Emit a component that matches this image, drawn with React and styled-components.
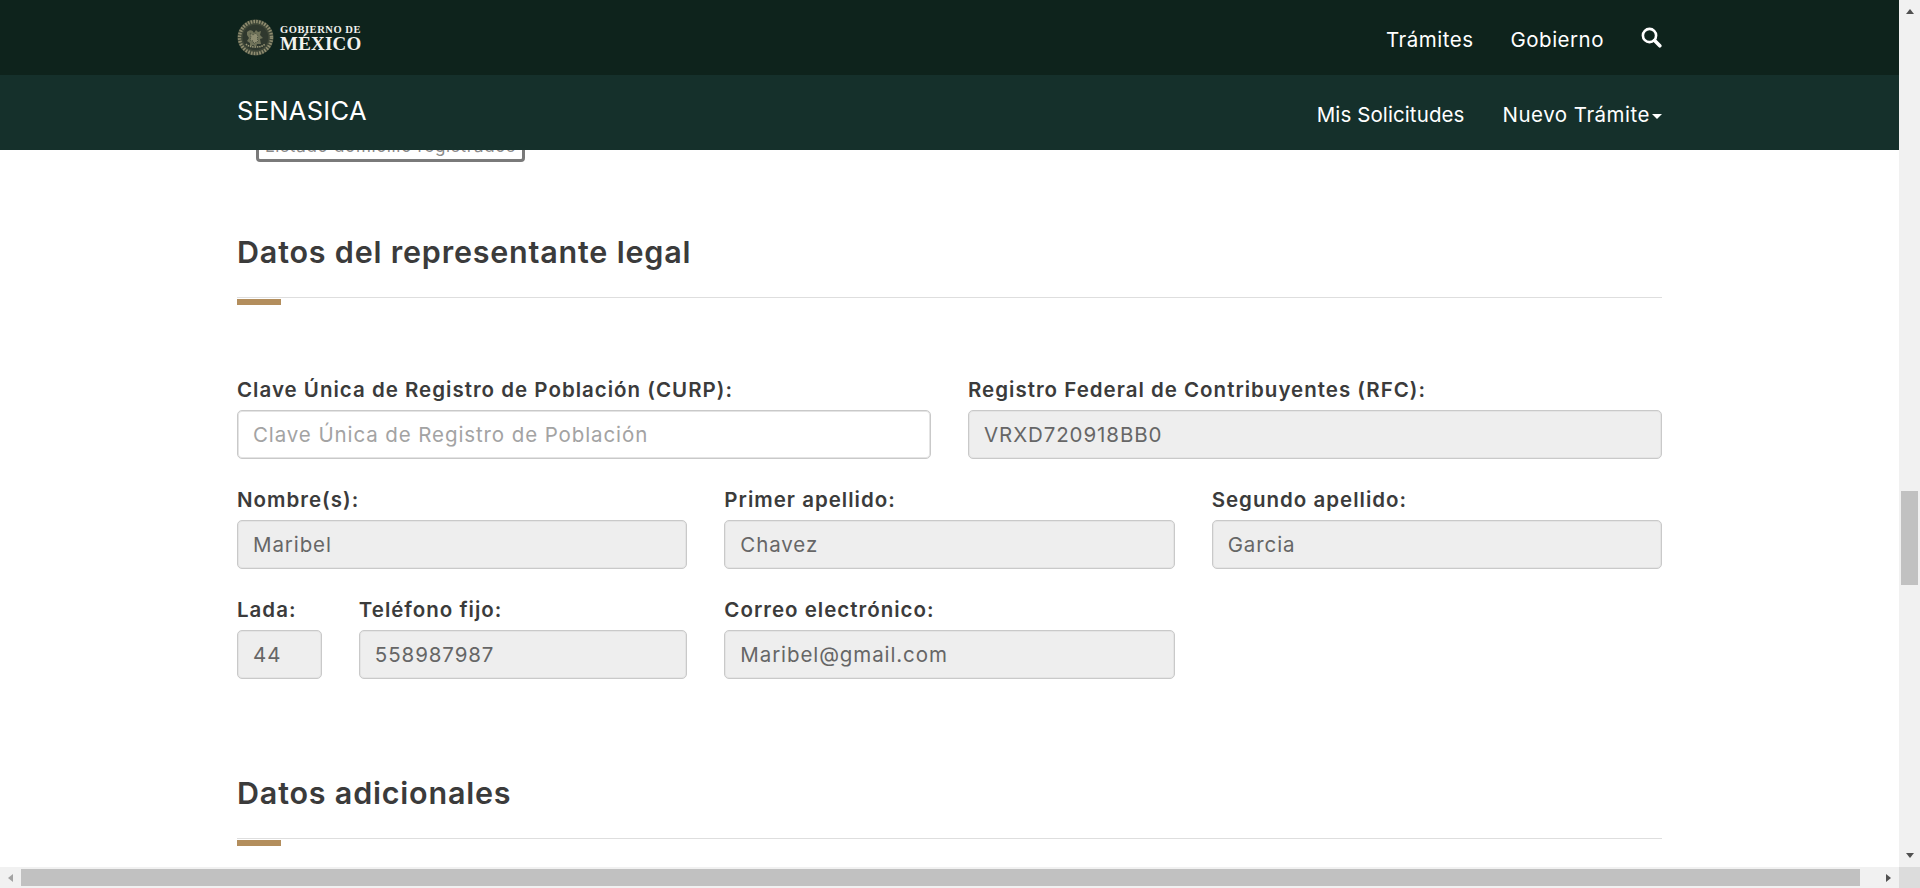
import React from "react"
import styled, { createGlobalStyle } from "styled-components"

const GlobalStyle = createGlobalStyle`
  html, body {
    margin: 0;
    padding: 0;
    height: 100%;
    overflow: hidden;
    background: #fff;
    font-family: Inter, "Noto Sans", "Liberation Sans", sans-serif;
  }
  * { box-sizing: border-box; }
`

const Frame = styled.div`
  display: grid;
  grid-template-columns: 1fr 21px;
  grid-template-rows: 1fr 21px;
  width: 1920px;
  height: 888px;
  overflow: hidden;
`

const Page = styled.div`
  display: flex;
  flex-direction: column;
  min-width: 0;
  min-height: 0;
  overflow: hidden;
`

const TopBar = styled.div`
  flex: 0 0 75px;
  background: #0e231c;
  position: relative;
  z-index: 2;
`

const SubBar = styled.div`
  flex: 0 0 75px;
  background: #15302b;
  position: relative;
  z-index: 2;
`

const BarInner = styled.div`
  display: flex;
  align-items: center;
  justify-content: space-between;
  width: 1425px;
  height: 100%;
  margin-left: 237px;
`

const Logo = styled.div`
  display: flex;
  align-items: center;
  gap: 6px;
  margin-top: -1px;
`

const LogoText = styled.div`
  display: flex;
  flex-direction: column;
  padding-top: 3px;
  font-family: "Liberation Serif", serif;
  font-weight: 700;
  color: #f2f2ee;
`

const LogoSmall = styled.span`
  font-size: 10.5px;
  line-height: 11px;
  letter-spacing: 0.55px;
`

const LogoBig = styled.span`
  font-size: 19px;
  line-height: 18px;
  letter-spacing: 0.2px;
`

const Nav = styled.nav`
  display: flex;
  align-items: center;
  gap: ${p => p.$gap}px;
  margin-top: ${p => p.$top}px;
`

const NavLink = styled.a`
  color: #fff;
  font-size: 20.5px;
  font-weight: 400;
  letter-spacing: ${p => p.$spacing ?? 0.5}px;
  white-space: nowrap;
`

const SearchButton = styled.span`
  display: flex;
  margin-top: -4px;
`

const Caret = styled.span`
  display: inline-block;
  width: 0;
  height: 0;
  margin-left: 2px;
  vertical-align: 3px;
  border-top: 5px solid #fff;
  border-left: 5px solid transparent;
  border-right: 5px solid transparent;
`

const Brand = styled.span`
  color: #fff;
  font-size: 25.5px;
  font-weight: 400;
  letter-spacing: 0.3px;
  margin-top: -5px;
`

const Body = styled.main`
  flex: 1;
  min-height: 0;
  overflow: hidden;
  padding-left: 237px;
`

const Content = styled.div`
  width: 1425px;
  margin-top: -24px;
`

const ListButton = styled.button`
  display: block;
  width: 269px;
  height: 36px;
  margin-left: 19px;
  padding: 3px 6px 0;
  background: #fff;
  border: 3px solid #7a7a7a;
  border-radius: 4px;
  color: #8a8a8a;
  font: 400 17px Inter, sans-serif;
  letter-spacing: 0.7px;
  white-space: nowrap;
  text-align: left;
`

const Section = styled.section`
  margin-top: ${p => p.$top}px;
`

const Title = styled.h2`
  margin: 0;
  height: 46px;
  color: #3b3b3b;
  font-size: 30.5px;
  line-height: 46px;
  font-weight: 600;
  letter-spacing: 0.8px;
  white-space: nowrap;
`

const Rule = styled.div`
  height: 1px;
  margin-top: 22px;
  background: #dedede;
`

const Accent = styled.div`
  width: 44px;
  height: 6px;
  margin-top: 1px;
  background: #b38e5d;
`

const FormGrid = styled.div`
  display: grid;
  grid-template-columns: repeat(12, 1fr);
  column-gap: 37px;
  row-gap: 25px;
  margin-top: 69px;
`

const Field = styled.div`
  grid-column: span ${p => p.$span};
  min-width: 0;
`

const Label = styled.label`
  display: block;
  height: 31px;
  margin-bottom: 5px;
  color: #3b3b3b;
  font-size: 20.5px;
  line-height: 31px;
  font-weight: 600;
  letter-spacing: 1px;
  white-space: nowrap;
`

const Input = styled.input`
  display: block;
  width: 100%;
  height: 49px;
  padding: 0 15px;
  background: #fff;
  border: 1px solid #c9c9c9;
  border-radius: 5px;
  box-shadow: inset 0 0 0 1px #e4e4e4;
  font: 400 20.5px Inter, sans-serif;
  letter-spacing: 0.9px;
  color: #666;
  outline: none;

  &::placeholder {
    color: #a3a3a3;
    opacity: 1;
  }

  &:disabled {
    background: #eeeeee;
    color: #666;
    -webkit-text-fill-color: #666;
    opacity: 1;
  }
`

const VScroll = styled.div`
  display: flex;
  flex-direction: column;
  align-items: center;
  background: #f1f1f1;
  padding-top: 9px;
`

const HScroll = styled.div`
  display: flex;
  align-items: center;
  background: #f1f1f1;
`

const VThumb = styled.div`
  width: 17px;
  height: 94px;
  margin-top: 477px;
  background: #c1c1c1;
`

const HThumb = styled.div`
  width: 1839px;
  height: 17px;
  background: #c1c1c1;
`

const Corner = styled.div`
  background: #dcdcdc;
`

const ArrowCell = styled.div`
  display: flex;
  align-items: center;
  justify-content: ${p => (p.$end ? "flex-end" : "center")};
  flex: 0 0 ${p => p.$size}px;
  padding-right: ${p => (p.$end ? 8 : 0)}px;
`

const ArrowUp = styled.span`
  width: 0;
  height: 0;
  border-left: 4.5px solid transparent;
  border-right: 4.5px solid transparent;
  border-bottom: 5px solid #505050;
`

const ArrowDown = styled.span`
  width: 0;
  height: 0;
  margin-top: auto;
  margin-bottom: 9px;
  border-left: 4.5px solid transparent;
  border-right: 4.5px solid transparent;
  border-top: 5px solid #505050;
`

const ArrowLeft = styled.span`
  width: 0;
  height: 0;
  border-top: 4.5px solid transparent;
  border-bottom: 4.5px solid transparent;
  border-right: 5px solid #a3a3a3;
`

const ArrowRight = styled.span`
  width: 0;
  height: 0;
  border-top: 4.5px solid transparent;
  border-bottom: 4.5px solid transparent;
  border-left: 5px solid #505050;
`

const SearchIcon = () => (
  <svg width="21" height="21" viewBox="0 0 21 21" aria-hidden="true">
    <circle cx="8.5" cy="8.5" r="6.6" fill="none" stroke="#fff" strokeWidth="2.6" />
    <line x1="13.6" y1="13.6" x2="18.8" y2="18.8" stroke="#fff" strokeWidth="3.6" strokeLinecap="round" />
  </svg>
)

const Seal = () => (
  <svg width="37" height="37" viewBox="0 0 37 37" aria-hidden="true">
    <circle cx="18.5" cy="18.5" r="18" fill="#3f4738" />
    <circle cx="18.5" cy="18.5" r="16" fill="none" stroke="#8f8d70" strokeWidth="3.4" strokeDasharray="1.6 1.2" />
    <circle cx="18.5" cy="18.5" r="12.8" fill="#2f382e" />
    <path d="M10 13c3-3 6-2 7 1l2-3 2 2 3-1-1 4 3 3-3 1 1 5-4 0-1 3-3-2-3 2 0-4-3-2 2-3-2-3z" fill="#6f7259" />
    <path d="M13 14l3 2 3-2 2 3-1 3 2 2-3 1-2 2-1-3-3-1 1-3z" fill="#8f8e72" strokeDasharray="1 1" stroke="#3a4236" strokeWidth="0.8" />
    <path d="M9 25c3 4 16 4 19 0" fill="none" stroke="#9a9878" strokeWidth="1.6" strokeDasharray="1.5 0.8" />
  </svg>
)

const App = () => (
  <>
    <GlobalStyle />
    <Frame>
      <Page>
        <TopBar>
          <BarInner>
            <Logo>
              <Seal />
              <LogoText>
                <LogoSmall>GOBIERNO DE</LogoSmall>
                <LogoBig>MÉXICO</LogoBig>
              </LogoText>
            </Logo>
            <Nav $gap={37} $top={3}>
              <NavLink>Trámites</NavLink>
              <NavLink>Gobierno</NavLink>
              <SearchButton>
                <SearchIcon />
              </SearchButton>
            </Nav>
          </BarInner>
        </TopBar>
        <SubBar>
          <BarInner>
            <Brand>SENASICA</Brand>
            <Nav $gap={38} $top={3}>
              <NavLink $spacing={0.1}>Mis Solicitudes</NavLink>
              <NavLink>
                Nuevo Trámite
                <Caret />
              </NavLink>
            </Nav>
          </BarInner>
        </SubBar>
        <Body>
          <Content>
            <ListButton>Listado domicilio registrados</ListButton>
            <Section $top={67}>
              <Title>Datos del representante legal</Title>
              <Rule />
              <Accent />
              <FormGrid>
                <Field $span={6}>
                  <Label>Clave Única de Registro de Población (CURP):</Label>
                  <Input placeholder="Clave Única de Registro de Población" />
                </Field>
                <Field $span={6}>
                  <Label>Registro Federal de Contribuyentes (RFC):</Label>
                  <Input disabled value="VRXD720918BB0" />
                </Field>
                <Field $span={4}>
                  <Label>Nombre(s):</Label>
                  <Input disabled value="Maribel" />
                </Field>
                <Field $span={4}>
                  <Label>Primer apellido:</Label>
                  <Input disabled value="Chavez" />
                </Field>
                <Field $span={4}>
                  <Label>Segundo apellido:</Label>
                  <Input disabled value="Garcia" />
                </Field>
                <Field $span={1}>
                  <Label>Lada:</Label>
                  <Input disabled value="44" />
                </Field>
                <Field $span={3}>
                  <Label>Teléfono fijo:</Label>
                  <Input disabled value="558987987" />
                </Field>
                <Field $span={4}>
                  <Label>Correo electrónico:</Label>
                  <Input disabled value="Maribel@gmail.com" />
                </Field>
              </FormGrid>
            </Section>
            <Section $top={91}>
              <Title>Datos adicionales</Title>
              <Rule />
              <Accent />
            </Section>
          </Content>
        </Body>
      </Page>
      <VScroll>
        <ArrowUp />
        <VThumb />
        <ArrowDown />
      </VScroll>
      <HScroll>
        <ArrowCell $size={21}>
          <ArrowLeft />
        </ArrowCell>
        <HThumb />
        <ArrowCell $size={39} $end>
          <ArrowRight />
        </ArrowCell>
      </HScroll>
      <Corner />
    </Frame>
  </>
)

export default App
